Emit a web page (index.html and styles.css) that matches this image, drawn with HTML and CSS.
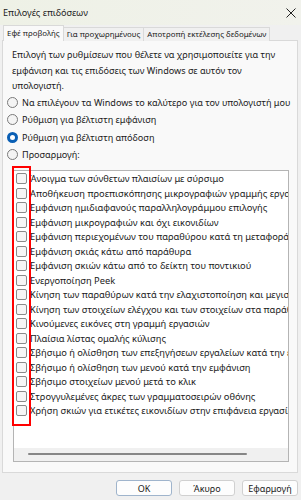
FILE: index.html
```
<!DOCTYPE html>
<html lang="el">
<head>
    <meta charset="UTF-8">
    <meta name="viewport" content="width=device-width, initial-scale=1.0">
    <title>Επιλογές επιδόσεων</title>
    <link rel="stylesheet" href="styles.css">
</head>
<body>
    <div class="window">
        <div class="titlebar">
            <span class="title">Επιλογές επιδόσεων</span>
            <svg class="close" width="10" height="10" viewBox="0 0 10 10">
                <path d="M0.5 0.5 L9.5 9.5 M9.5 0.5 L0.5 9.5" stroke="#222" stroke-width="1" fill="none"/>
            </svg>
        </div>

        <div class="tabs">
            <div class="tab active">Εφέ προβολής</div>
            <div class="tab">Για προχωρημένους</div>
            <div class="tab">Αποτροπή εκτέλεσης δεδομένων</div>
        </div>

        <div class="panel">
            <p class="desc">Επιλογή των ρυθμίσεων που θέλετε να χρησιμοποιείτε για την εμφάνιση και τις επιδόσεις των Windows σε αυτόν τον υπολογιστή.</p>

            <div class="radios">
                <div class="radio"><span class="dot"></span><span>Να επιλέγουν τα Windows το καλύτερο για τον υπολογιστή μου</span></div>
                <div class="radio"><span class="dot"></span><span>Ρύθμιση για βέλτιστη εμφάνιση</span></div>
                <div class="radio"><span class="dot on"></span><span>Ρύθμιση για βέλτιστη απόδοση</span></div>
                <div class="radio"><span class="dot"></span><span>Προσαρμογή:</span></div>
            </div>

            <div class="listwrap">
                <div class="list">
                    <div class="items">
                        <div class="item"><span class="box"></span>Άνοιγμα των σύνθετων πλαισίων με σύρσιμο</div>
                        <div class="item"><span class="box"></span>Αποθήκευση προεπισκόπησης μικρογραφιών γραμμής εργασιών</div>
                        <div class="item"><span class="box"></span>Εμφάνιση ημιδιαφανούς παραλληλογράμμου επιλογής</div>
                        <div class="item"><span class="box"></span>Εμφάνιση μικρογραφιών και όχι εικονιδίων</div>
                        <div class="item"><span class="box"></span>Εμφάνιση περιεχομένων του παραθύρου κατά τη μεταφορά</div>
                        <div class="item"><span class="box"></span>Εμφάνιση σκιάς κάτω από παράθυρα</div>
                        <div class="item"><span class="box"></span>Εμφάνιση σκιών κάτω από το δείκτη του ποντικιού</div>
                        <div class="item"><span class="box"></span>Ενεργοποίηση Peek</div>
                        <div class="item"><span class="box"></span>Κίνηση των παραθύρων κατά την ελαχιστοποίηση και μεγιστοποίηση</div>
                        <div class="item"><span class="box"></span>Κίνηση των στοιχείων ελέγχου και των στοιχείων στα παράθυρα</div>
                        <div class="item"><span class="box"></span>Κινούμενες εικόνες στη γραμμή εργασιών</div>
                        <div class="item"><span class="box"></span>Πλαίσια λίστας ομαλής κύλισης</div>
                        <div class="item"><span class="box"></span>Σβήσιμο ή ολίσθηση των επεξηγήσεων εργαλείων κατά την εμφάνιση</div>
                        <div class="item"><span class="box"></span>Σβήσιμο ή ολίσθηση των μενού κατά την εμφάνιση</div>
                        <div class="item"><span class="box"></span>Σβήσιμο στοιχείων μενού μετά το κλικ</div>
                        <div class="item"><span class="box"></span>Στρογγυλεμένες άκρες των γραμματοσειρών οθόνης</div>
                        <div class="item"><span class="box"></span>Χρήση σκιών για ετικέτες εικονιδίων στην επιφάνεια εργασίας</div>
                    </div>
                    <div class="hscroll"><span class="thumb"></span></div>
                </div>
                <div class="mark"></div>
            </div>
        </div>

        <div class="buttons">
            <button class="btn default">OK</button>
            <button class="btn">Άκυρο</button>
            <button class="btn">Εφαρμογή</button>
        </div>
    </div>
</body>
</html>
```

FILE: styles.css
```
*{
    padding: 0;
    margin: 0;
    box-sizing: border-box;
    font-family: "Noto Sans", "Open Sans", sans-serif;
}
body{
    background-color: #f0f0f0;
    color: #1a1a1a;
    font-size: 9.1px;
}
.window{
    width: 301px;
    height: 500px;
    overflow: hidden;
}
.titlebar{
    height: 25px;
    display: flex;
    align-items: center;
    justify-content: space-between;
    padding: 0 5px 0 3px;
    background: linear-gradient(90deg, #eef1e6, #f1f2ec);
}
.title{
    font-size: 9.1px;
    color: #222;
}
.tabs{
    display: flex;
    align-items: flex-end;
    height: 16px;
    padding-left: 3px;
    position: relative;
    z-index: 1;
}
.tab{
    height: 14px;
    line-height: 13px;
    padding: 0 3px;
    font-size: 7.9px;
    white-space: nowrap;
    border: 1px solid #d9d9d9;
    border-bottom: none;
    margin-left: -1px;
    background-color: #f0f0f0;
}
.tab.active{
    height: 16px;
    line-height: 15px;
    background-color: #f9f9f9;
    margin-left: 0;
}
.panel{
    margin: -1px 3px 0 2px;
    height: 433px;
    background-color: #f9f9f9;
    border: 1px solid #d9d9d9;
    padding-top: 6px;
}
.desc{
    padding: 0 10px 0 9px;
    line-height: 15.5px;
}
.radios{
    padding-left: 4px;
}
.radio{
    height: 17.5px;
    display: flex;
    align-items: center;
    gap: 4px;
    white-space: nowrap;
}
.dot{
    flex: none;
    width: 11px;
    height: 11px;
    border-radius: 50%;
    border: 1px solid #7a7a7a;
    background-color: #f4f4f4;
}
.dot.on{
    border: 3px solid #0a5fb4;
    background-color: #fff;
}
.listwrap{
    position: relative;
    margin: 6px 0 0 10px;
    width: 276px;
}
.list{
    height: 292px;
    border: 1px solid #b4b4b4;
    background-color: #fff;
    overflow: hidden;
    display: flex;
    flex-direction: column;
}
.items{
    flex: 1;
    padding-top: 1px;
}
.item{
    height: 14.5px;
    display: flex;
    align-items: center;
    gap: 3px;
    padding-left: 2px;
    white-space: nowrap;
    font-size: 9.3px;
}
.box{
    flex: none;
    width: 11px;
    height: 11px;
    border: 1px solid #8a8a8a;
    border-radius: 2px;
    background-color: #f6f6f6;
}
.hscroll{
    height: 13px;
    background-color: #f0f0f0;
    display: flex;
    align-items: center;
    padding-left: 14px;
}
.thumb{
    width: 219px;
    height: 2px;
    border-radius: 1px;
    background-color: #868686;
}
.mark{
    position: absolute;
    left: -1px;
    top: -4px;
    width: 19px;
    height: 260px;
    border: 2px solid #f00;
}
.buttons{
    display: flex;
    justify-content: flex-end;
    gap: 7px;
    padding: 7px 3px 0 0;
}
.btn{
    width: 56px;
    height: 16px;
    font-size: 9px;
    background-color: #fdfdfd;
    border: 1px solid #d0d0d0;
    border-radius: 3px;
    color: #1a1a1a;
}
.btn.default{
    border-color: #9fb4cc;
}
```
